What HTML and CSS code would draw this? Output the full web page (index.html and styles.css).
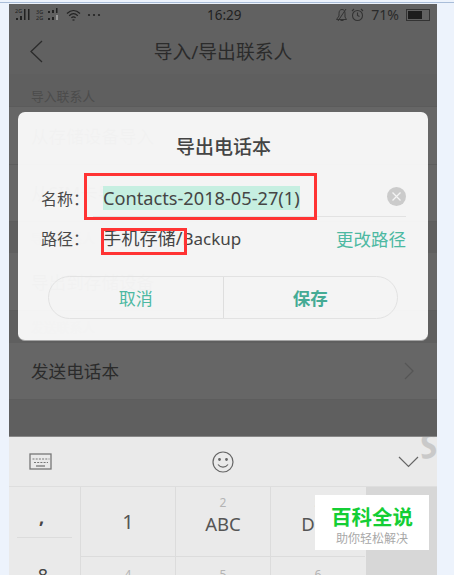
FILE: index.html
```html
<!DOCTYPE html>
<html lang="zh-CN">
<head>
  <meta charset="UTF-8">
  <meta name="viewport" content="width=device-width, initial-scale=1.0">
  <title>导出电话本</title>
  <link rel="stylesheet" href="styles.css">
</head>
<body>
  <div class="top-line"></div>
  <div class="phone">
    <div class="screen">
      <div class="status-bar">
        <div class="status-left">
          <svg width="16" height="13" viewBox="0 0 16 13"><text x="0" y="5" class="tiny">2G</text><g fill="#222"><rect x="1" y="10" width="2" height="2"/><rect x="5" y="8" width="2" height="4"/><rect x="9" y="1" width="1.500" height="11"/><rect x="13" y="1" width="1.500" height="11"/></g></svg>
          <svg width="25" height="13" viewBox="0 0 25 13"><text x="0" y="5.500" class="tiny">3G</text><text x="0" y="12" class="tiny">2G</text><g fill="#222"><rect x="12" y="3" width="2" height="2"/><rect x="16" y="2" width="2" height="3"/><rect x="20" y="0" width="1.500" height="5"/><rect x="12" y="10" width="2" height="2"/><rect x="16" y="9" width="2" height="3"/></g><rect x="20" y="7" width="2" height="5" fill="#999"/></svg>
          <svg width="15" height="12" viewBox="0 0 15 12" fill="none" stroke="#222" stroke-width="1.200"><path d="M1 4.500C5 .5 10 .5 14 4.500M3.200 6.700C6 4 9 4 11.800 6.700M5.400 8.800C6.800 7.600 8.200 7.600 9.600 8.800"/><path d="M6.500 11h2"/></svg>
          <svg class="dots" width="14" height="4" viewBox="0 0 14 4" fill="#222"><circle cx="2" cy="2" r="1.100"/><circle cx="7" cy="2" r="1.100"/><circle cx="12" cy="2" r="1.100"/></svg>
        </div>
        <div class="status-time">16:29</div>
        <div class="status-right">
          <svg width="14" height="14" viewBox="0 0 14 14" fill="none" stroke="#333" stroke-width="1"><path d="M1.500 11.500h10L10 9V5.500C10 3 9 1.500 7 1.500S4 3 4 5.500V8L1.500 11.500zM5.500 12.500h3M11 1 3 13"/></svg>
          <svg width="13" height="14" viewBox="0 0 13 14" fill="none" stroke="#333" stroke-width="1.100"><circle cx="6.500" cy="7.500" r="5"/><path d="M6.500 4.500v3l2 1M1 3l2-2M12 3l-2-2"/></svg>
          <span class="battery-text">71%</span>
          <div class="battery"><div class="battery-fill"></div></div>
        </div>
      </div>

      <div class="nav-bar">
        <svg class="nav-back" width="14" height="23" viewBox="0 0 14 23" fill="none" stroke="#2b2b2b" stroke-width="1.300"><path d="M13 1 2 11.500 13 22"/></svg>
        <div class="nav-title">导入/导出联系人</div>
      </div>

      <div class="section-label first">导入联系人</div>
      <div class="row">从存储设备导入</div>
      <div class="row">从SIM卡导入</div>
      <div class="section-label">导出联系人</div>
      <div class="row">导出到存储设备</div>
      <div class="section-label short">发送联系人</div>
      <div class="row send-row">
        发送电话本
        <svg width="10" height="18" viewBox="0 0 10 18" fill="none" stroke="#565656" stroke-width="1.200"><path d="M1 1l8 8-8 8"/></svg>
      </div>
      <div class="spacer"></div>

      <div class="keyboard">
        <div class="kb-tools">
          <svg width="24" height="18" viewBox="0 0 24 18" fill="none" stroke="#777"><rect x="1" y="1" width="21" height="15" stroke-width="1.300"/><path d="M3.500 6h17M5 9.500h14" stroke-dasharray="2 1.200"/><path d="M7 13h9" stroke-width="1.300"/></svg>
          <svg width="24" height="24" viewBox="0 0 24 24" fill="none" stroke="#666" stroke-width="1.200"><circle cx="12" cy="12" r="10"/><circle cx="8.500" cy="9.500" r=".8" fill="#666"/><circle cx="15.500" cy="9.500" r=".8" fill="#666"/><path d="M7 14.500c2.500 3.500 7.500 3.500 10 0"/></svg>
          <svg width="21" height="12" viewBox="0 0 21 12" fill="none" stroke="#666" stroke-width="1.200"><path d="M1 1l9.500 9.500L20 1"/></svg>
          <span class="kb-mark">S</span>
        </div>
        <div class="kb-keys">
          <div class="key-side">
            <div class="side-comma">,</div>
            <div class="side-num">8</div>
          </div>
          <div class="key-grid">
            <div class="key"><span class="key-main num">1</span></div>
            <div class="key key-abc"><span class="key-sub">2</span><span class="key-main">ABC</span></div>
            <div class="key key-abc"><span class="key-sub">3</span><span class="key-main">DEF</span></div>
            <div class="key key-low"><span class="key-sub">4</span></div>
            <div class="key key-low"><span class="key-sub">5</span></div>
            <div class="key key-low"><span class="key-sub">6</span></div>
          </div>
          <div class="key-action"></div>
        </div>
      </div>
    </div>

    <div class="dialog">
      <div class="dialog-title">导出电话本</div>
      <div class="field field-name">
        <span class="field-label">名称：</span>
        <span class="field-value selected">Contacts-2018-05-27(1)</span>
        <svg class="clear-icon" width="19" height="19" viewBox="0 0 19 19"><circle cx="9.500" cy="9.500" r="9.500" fill="#cbcbcb"/><path d="M5.500 5.500l8 8M13.500 5.500l-8 8" stroke="#f4f4f4" stroke-width="1.300"/></svg>
      </div>
      <div class="field field-path">
        <span class="field-label">路径：</span>
        <span class="field-value">手机存储/<span class="path-dir">Backup</span></span>
        <span class="change-path">更改路径</span>
      </div>
      <div class="dialog-btns">
        <div class="btn">取消</div>
        <div class="btn btn-save">保存</div>
      </div>
    </div>
  </div>

  <div class="mark-box mark-name"></div>
  <div class="mark-box mark-path"></div>

  <div class="watermark">
    <div class="wm-title">百科全说</div>
    <div class="wm-sub">助你轻松解决</div>
  </div>
</body>
</html>
```

FILE: styles.css
```css
html, body {
  height: 100%;
}

body {
  margin: 0;
  height: 575px;
  overflow: hidden;
  position: relative;
  background: #edf3fc;
  font-family: "Noto Sans", "Noto Sans CJK SC", sans-serif;
}

.top-line {
  height: 1px;
  margin-top: 2px;
  background: #a9bdd8;
}

.phone {
  position: relative;
  width: 428px;
  height: 571px;
  margin: 1px 0 0 9px;
  overflow: hidden;
}

.screen {
  display: flex;
  flex-direction: column;
  height: 100%;
  background: #5f5f5f;
  color: #2b2b2b;
}

.status-bar {
  display: flex;
  justify-content: space-between;
  align-items: center;
  position: relative;
  height: 26px;
  box-sizing: border-box;
  padding: 0 7px 5px 6px;
  background: #616161;
  flex: none;
}

.status-left,
.status-right {
  display: flex;
  align-items: center;
  gap: 5px;
}

.status-right {
  gap: 2px;
}

.tiny {
  font-size: 5.500px;
  fill: #222;
}

.dots {
  margin-left: 1px;
}

.status-time {
  position: absolute;
  left: 198px;
  top: 2px;
  font-size: 13.500px;
  color: #222;
}

.battery-text {
  font-size: 14px;
  color: #2a2a2a;
  margin: 0 5px 0 5px;
}

.battery {
  width: 20px;
  height: 8px;
  border: 1px solid #333;
  padding: 1px;
}

.battery-fill {
  width: 70%;
  height: 100%;
  background: #1d1d1d;
}

.nav-bar {
  display: flex;
  justify-content: center;
  align-items: center;
  position: relative;
  height: 44px;
  background: #616161;
  flex: none;
}

.nav-back {
  position: absolute;
  left: 20px;
  top: 10px;
}

.nav-title {
  font-size: 18.800px;
  margin-top: -2px;
}

.section-label {
  display: flex;
  align-items: center;
  box-sizing: border-box;
  height: 31px;
  padding-left: 22px;
  font-size: 12.800px;
  color: #4c4c4c;
  background: #5f5f5f;
  flex: none;
}

.section-label.first {
  height: 33px;
  padding-top: 11px;
  border-bottom: 1px solid #5b5b5b;
}

.section-label.short {
  height: 32px;
}

.row {
  display: flex;
  justify-content: space-between;
  align-items: center;
  box-sizing: border-box;
  height: 57.500px;
  padding: 0 23px 0 22px;
  font-size: 17.600px;
  background: #666;
  border-bottom: 1px solid #5d5d5d;
  flex: none;
}

.spacer {
  flex: 1;
}

.keyboard {
  flex: none;
  height: 138px;
  background: #eaeaea;
  border-top: 1px solid #888;
}

.kb-tools {
  display: flex;
  align-items: center;
  position: relative;
  height: 49px;
  padding-left: 20px;
  overflow: hidden;
  border-bottom: 1px solid #dedede;
}

.kb-tools svg:nth-child(2) {
  margin-left: 158px;
}

.kb-tools svg:nth-child(3) {
  margin-left: 163px;
}

.kb-mark {
  position: absolute;
  right: 0;
  top: -15px;
  font-size: 34px;
  font-weight: 700;
  font-style: italic;
  color: #c9c9c9;
  transform: rotate(-12deg);
}

.kb-keys {
  display: flex;
  height: 88px;
}

.key-side {
  width: 71px;
  flex: none;
  padding: 0 8px;
  box-sizing: border-box;
  color: #444;
}

.side-comma {
  height: 51px;
  padding-right: 6px;
  border-bottom: 1px solid #dcdcdc;
  box-sizing: border-box;
  text-align: center;
  font-size: 18px;
  font-weight: 700;
  line-height: 60px;
}

.side-num {
  margin-top: 25px;
  padding-right: 3px;
  text-align: center;
  font-size: 18px;
  line-height: 24px;
}

.key-grid {
  display: grid;
  grid-template-columns: 95px 95px 95px;
  grid-template-rows: 70px 70px;
  flex: none;
  width: 286px;
}

.key {
  display: flex;
  flex-direction: column;
  align-items: center;
  justify-content: center;
  border-left: 1px solid #dcdcdc;
  border-bottom: 1px solid #dcdcdc;
  box-sizing: border-box;
  color: #555;
}

.key-abc {
  padding-bottom: 12px;
}

.key-low {
  justify-content: flex-start;
  padding-top: 10px;
}

.key-sub {
  font-size: 12px;
  line-height: 16px;
  color: #b4b4b4;
}

.key-main {
  font-size: 18.500px;
  line-height: 26px;
}

.key-main.num {
  font-size: 20px;
}

.key-action {
  flex: 1;
  background: #d7d7d7;
}

.dialog {
  position: absolute;
  left: 9px;
  top: 108px;
  box-sizing: border-box;
  width: 410px;
  height: 228.500px;
  padding: 0 22px 0 23px;
  border-radius: 7px;
  background: rgba(250, 250, 250, 0.96);
  border-bottom: 1px solid #a5a5a5;
}

.dialog-title {
  height: 66px;
  padding-top: 1px;
  box-sizing: border-box;
  display: flex;
  align-items: center;
  justify-content: center;
  font-size: 19px;
  font-weight: 500;
  color: #444;
}

.field {
  display: flex;
  align-items: center;
  position: relative;
}

.field-name {
  height: 39px;
}

.field-name::after {
  content: '';
  position: absolute;
  left: 52px;
  right: 0;
  bottom: 0;
  height: 1px;
  background: #e2e2e2;
}

.field-path {
  height: 42px;
}

.field-label {
  width: 62px;
  flex: none;
  font-size: 16px;
  color: #4a4a4a;
}

.field-value {
  font-size: 18.200px;
  line-height: 24px;
  color: #454545;
}

.path-dir {
  font-size: 17px;
}

.selected {
  background: #c6efe1;
}

.clear-icon {
  position: absolute;
  right: 0;
  top: 9px;
}

.change-path {
  margin-left: auto;
  font-size: 17.500px;
  color: #4db9a2;
}

.dialog-btns {
  display: flex;
  width: 350px;
  height: 43px;
  margin: 17px 0 0 7px;
  border: 1px solid #e2e2e2;
  border-radius: 22px;
  box-sizing: border-box;
}

.btn {
  flex: 1;
  display: flex;
  align-items: center;
  justify-content: center;
  font-size: 17px;
  color: #4db9a2;
}

.btn-save {
  border-left: 1px solid #dedede;
  font-size: 17.500px;
  font-weight: 700;
  color: #45ab95;
}

.mark-box {
  position: absolute;
  box-sizing: border-box;
  border: 3px solid #ff3333;
}

.mark-name {
  left: 84px;
  top: 173px;
  width: 233px;
  height: 47px;
}

.mark-path {
  left: 101px;
  top: 228px;
  width: 86px;
  height: 27px;
}

.watermark {
  position: absolute;
  left: 315px;
  top: 495px;
  width: 114px;
  height: 55px;
  background: #fff;
  display: flex;
  flex-direction: column;
  align-items: center;
  padding-top: 9px;
  box-sizing: border-box;
}

.wm-title {
  font-size: 20.500px;
  line-height: 26px;
  font-weight: 700;
  color: #14ce35;
}

.wm-sub {
  font-size: 12px;
  line-height: 17px;
  color: #a8a8a8;
}
```
